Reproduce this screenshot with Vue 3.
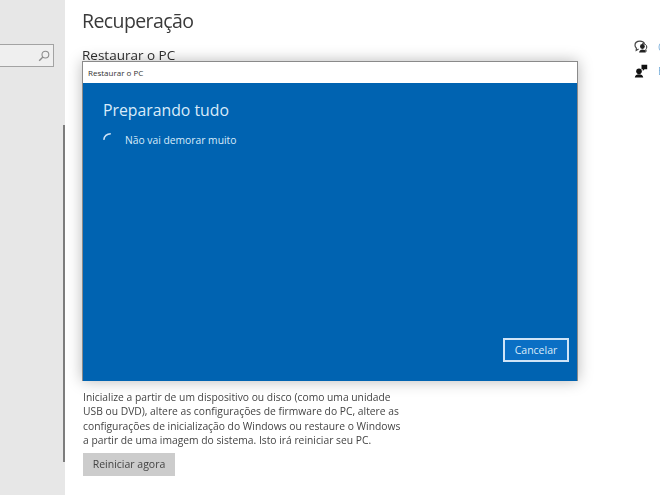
<template>
  <div class="page">
    <aside class="sidebar">
      <div class="search">
        <svg width="12" height="12" viewBox="0 0 12 12" fill="none" stroke="#8c8c8c" stroke-width="1.1">
          <circle cx="7.4" cy="4.6" r="3.4" />
          <path d="M4.9 7.1 1.2 10.8" stroke-width="1.4" />
        </svg>
      </div>
      <div class="scrollbar"></div>
    </aside>

    <main class="content">
      <div class="left">
        <h1>Recuperação</h1>
        <h2>Restaurar o PC</h2>
        <p class="desc">
          Inicialize a partir de um dispositivo ou disco (como uma unidade<br />
          USB ou DVD), altere as configurações de firmware do PC, altere as<br />
          configurações de inicialização do Windows ou restaure o Windows<br />
          a partir de uma imagem do sistema. Isto irá reiniciar seu PC.
        </p>
        <button class="restart">Reiniciar agora</button>
      </div>
      <div class="help">
        <div class="help-row">
          <svg width="14" height="14" viewBox="0 0 14 14">
            <path d="M6 1.200C3 1.200 1 2.900 1 5.200c0 1.200.6 2.200 1.400 2.900L2.200 10.500l2.400-1.400" fill="none" stroke="#444" stroke-width="1.200" />
            <path d="M6 1.200c2 0 3.700.9 4.500 2.400" fill="none" stroke="#444" stroke-width="1.200" />
            <path d="M8 3.800c2.500-.6 4.800 1 4.800 3.200 0 1-.4 1.800-1 2.400l.4 2-2.200-1.200" fill="none" stroke="#333" stroke-width="1" />
            <circle cx="8.400" cy="6.500" r="2.400" fill="#222" />
            <path d="M5 12.500c.4-2 1.800-3 3.400-3s3 1 3.400 3z" fill="#222" />
          </svg>
          <span>O</span>
        </div>
        <div class="help-row">
          <svg width="14" height="14" viewBox="0 0 14 14" fill="#111">
            <circle cx="5" cy="7.300" r="2.800" />
            <path d="M.8 13.600c.3-2.300 2-3.300 4.200-3.300s3.900 1 4.200 3.300z" />
            <path d="M7.500 .8h5.700v4.400h-2.700L8.800 7V5.200H7.500z" />
          </svg>
          <span>E</span>
        </div>
      </div>
    </main>

    <section class="dialog">
      <div class="dialog-title">Restaurar o PC</div>
      <div class="dialog-body">
        <div class="heading">Preparando tudo</div>
        <div class="status">
          <svg width="12" height="12" viewBox="0 0 12 12" fill="none">
            <path d="M.8 7.800C1.300 4 3.800 1.900 7.800 1.800" stroke="#cfe4f7" stroke-width="1.500" />
          </svg>
          <span>Não vai demorar muito</span>
        </div>
        <div class="actions">
          <button class="cancel">Cancelar</button>
        </div>
      </div>
    </section>
  </div>
</template>

<script setup>
</script>

<style>
html, body {
  margin: 0;
  background: #fff;
  overflow: hidden;
}
</style>

<style scoped>
.page {
  position: relative;
  display: flex;
  width: 660px;
  height: 495px;
  overflow: hidden;
  font-family: "Open Sans", "Noto Sans", sans-serif;
  color: #333;
  filter: blur(0.45px);
}
.sidebar {
  position: relative;
  flex: 0 0 65px;
  background: #e7e7e7;
  padding-top: 44px;
  box-sizing: border-box;
}
.search {
  display: flex;
  align-items: center;
  justify-content: flex-end;
  box-sizing: border-box;
  width: 54px;
  height: 23px;
  padding-right: 3px;
  background: #efefef;
  border: 1px solid #a3a3a3;
  border-left: 0;
}
.scrollbar {
  position: absolute;
  left: 63px;
  top: 125px;
  width: 1.500px;
  height: 337px;
  background: #7d7d7d;
}
.content {
  flex: 1;
  display: flex;
  justify-content: space-between;
  padding: 8px 0 0 17px;
}
h1 {
  margin: 0;
  font-size: 19.500px;
  letter-spacing: -0.6px;
  line-height: 25px;
  font-weight: 400;
  color: #3a3a3a;
}
h2 {
  margin: 13px 0 0;
  font-size: 13.500px;
  line-height: 18px;
  font-weight: 400;
  color: #2e2e2e;
}
.desc {
  margin: 326px 0 0 1px;
  font-size: 10.300px;
  line-height: 14.400px;
  color: #444;
  white-space: nowrap;
}
.restart {
  display: block;
  margin: 5px 0 0 1px;
  width: 92px;
  height: 23px;
  padding: 0;
  border: 0;
  background: #cccccc;
  color: #444;
  font: 400 10.500px "Open Sans", "Noto Sans", sans-serif;
}
.help {
  width: 26px;
  padding-top: 32px;
  overflow: hidden;
}
.help-row {
  display: flex;
  align-items: center;
  gap: 10px;
  height: 14px;
  margin-bottom: 10px;
  font-size: 10px;
  color: #7fb2dc;
}
.help-row svg {
  flex: none;
}
.dialog {
  position: absolute;
  left: 82px;
  top: 61px;
  width: 496px;
  height: 320px;
  display: flex;
  flex-direction: column;
  box-sizing: border-box;
  box-shadow: 0 0 14px rgba(0, 0, 0, 0.28);
  border: 1px solid #8a8a8a;
  border-bottom: 0;
}
.dialog-title {
  height: 21px;
  padding-left: 5px;
  background: #fff;
  color: #333;
  font-size: 8px;
  line-height: 21px;
}
.dialog-body {
  flex: 1;
  display: flex;
  flex-direction: column;
  padding: 16px 8px 19px 20px;
  background: #0063b1;
  color: #d9ebfa;
}
.heading {
  font-size: 15.800px;
  line-height: 22px;
}
.status {
  display: flex;
  align-items: center;
  gap: 10px;
  margin-top: 12px;
  font-size: 10.300px;
  line-height: 14px;
}
.status svg {
  margin-top: -4px;
}
.actions {
  margin-top: auto;
  display: flex;
  justify-content: flex-end;
}
.cancel {
  box-sizing: border-box;
  width: 66px;
  height: 24px;
  padding: 0;
  border: 2px solid #cfe4f7;
  background: #0a6fc4;
  color: #d9ebfa;
  font: 400 10.500px "Open Sans", "Noto Sans", sans-serif;
}
</style>
